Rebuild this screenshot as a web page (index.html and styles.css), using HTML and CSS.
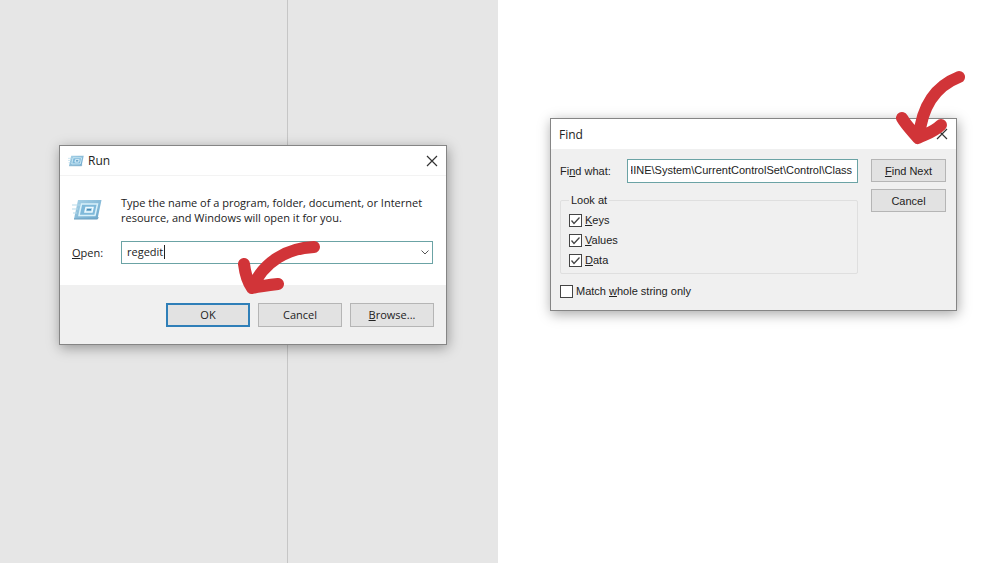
FILE: index.html
```html
<!DOCTYPE html>
<html lang="en">
<head>
    <meta charset="UTF-8">
    <meta name="viewport" content="width=device-width, initial-scale=1.0">
    <title>Run and Find</title>
    <link rel="stylesheet" href="styles.css">
</head>
<body>
    <main class="desktop">
        <section class="pane pane-run">
            <form class="window run">
                <header class="titlebar">
                    <svg class="small-icon" viewBox="0 0 30 22" aria-hidden="true"><use href="#run-icon"/></svg>
                    <h1>Run</h1>
                    <button type="button" class="close" aria-label="Close">
                        <svg viewBox="0 0 12 12" aria-hidden="true"><path d="M1 1l10 10M11 1L1 11"/></svg>
                    </button>
                </header>
                <div class="run-body">
                    <svg class="large-icon" viewBox="0 0 30 22" aria-hidden="true">
                        <defs>
                            <linearGradient id="blue" x1="0" y1="0" x2="1" y2="1">
                                <stop offset="0" stop-color="#a9d3e8"/>
                                <stop offset="1" stop-color="#6aa6cb"/>
                            </linearGradient>
                        </defs>
                        <g id="run-icon" fill="none">
                            <path d="M6 1h23.500l-4 19H2z" fill="url(#blue)"/>
                            <path d="M0 6h8M0 10h6M1 14h4" stroke="#b5d9ea" stroke-width="1.200"/>
                            <path d="M9.500 5h16l-2.500 11.500H7z" fill="#7fb9da" stroke="#d9f1fa" stroke-width="1.500"/>
                            <path d="M14 8.500h7l-1 4.500h-7z" fill="#8fc4e0" stroke="#eefaff" stroke-width="1.500"/>
                            <path d="M15 10.700h4" stroke="#4787b3" stroke-width="1.300"/>
                            <path d="M2 20h23.500l.6-2" stroke="#6a9fc0"/>
                        </g>
                    </svg>
                    <p>Type the name of a program, folder, document, or Internet resource, and Windows will open it for you.</p>
                    <label for="open"><u>O</u>pen:</label>
                    <div class="combo">
                        <input type="text" id="open" name="open" value="regedit">
                        <span class="caret"></span>
                        <button type="button" aria-label="Show list">
                            <svg viewBox="0 0 8 5" aria-hidden="true"><path d="M.5 .5L4 4 7.500 .5"/></svg>
                        </button>
                    </div>
                </div>
                <footer class="actions">
                    <button type="button" class="button default">OK</button>
                    <button type="button" class="button">Cancel</button>
                    <button type="button" class="button"><u>B</u>rowse...</button>
                </footer>
            </form>
            <svg class="arrow arrow-ok" viewBox="0 0 84 56" aria-hidden="true">
                <path d="M77 8C51 9 27 22 15 49M7 25c1 8 3 17 8 24 8-2 17-3 26-4"/>
            </svg>
        </section>

        <section class="pane">
            <form class="window find">
                <header class="titlebar">
                    <h1>Find</h1>
                    <button type="button" class="close" aria-label="Close">
                        <svg viewBox="0 0 12 12" aria-hidden="true"><path d="M1 1l10 10M11 1L1 11"/></svg>
                    </button>
                </header>
                <div class="find-body">
                    <div class="criteria">
                        <div class="search">
                            <label for="what">Fi<u>n</u>d what:</label>
                            <input type="text" id="what" name="what" value="HINE\System\CurrentControlSet\Control\Class">
                        </div>
                        <fieldset>
                            <legend>Look at</legend>
                            <label class="check"><input type="checkbox" checked><span><u>K</u>eys</span></label>
                            <label class="check"><input type="checkbox" checked><span><u>V</u>alues</span></label>
                            <label class="check"><input type="checkbox" checked><span><u>D</u>ata</span></label>
                        </fieldset>
                        <label class="check"><input type="checkbox"><span>Match <u>w</u>hole string only</span></label>
                    </div>
                    <div class="find-actions">
                        <button type="button" class="button"><u>F</u>ind Next</button>
                        <button type="button" class="button">Cancel</button>
                    </div>
                </div>
            </form>
            <svg class="arrow arrow-next" viewBox="0 0 72 76" aria-hidden="true">
                <path d="M65 8C42 17 28 36 25 68M8 49c4 7 10 13 16 20 8-4 16-6 23-13"/>
            </svg>
        </section>
    </main>
</body>
</html>
```
FILE: styles.css
```css
* {
    box-sizing: border-box;
}
body {
    margin: 0;
    background: #fff;
    color: #222;
    font-family: "Open Sans", "Noto Sans", sans-serif;
    font-size: 11px;
}
.desktop {
    display: grid;
    grid-template-columns: 498fr 502fr;
    min-height: 100vh;
}
.pane {
    position: relative;
}
.pane-run {
    background: linear-gradient(#c6c6c6, #c6c6c6) 287px 0 / 1px 100% no-repeat #e6e6e6;
}

/* windows */
.window {
    position: absolute;
    border: 1px solid #858585;
    background: #f0f0f0;
    box-shadow: 1px 3px 12px rgba(0, 0, 0, 0.35);
}
.run {
    left: 59px;
    top: 145px;
    width: 388px;
}
.find {
    left: 52px;
    top: 118px;
    width: 407px;
    font-family: "Liberation Sans", Arial, sans-serif;
}
.titlebar {
    display: flex;
    align-items: center;
    gap: 4px;
    height: 30px;
    padding: 0 8px;
    background: #fff;
}
.run .titlebar {
    border-bottom: 1px solid #f3f3f3;
}
.titlebar h1 {
    margin: 0;
    font-family: "Open Sans", "Noto Sans", sans-serif;
    font-size: 12px;
    font-weight: normal;
}
.small-icon {
    width: 16px;
    height: 12px;
}
.close {
    display: flex;
    margin-left: auto;
    padding: 0;
    border: 0;
    background: none;
}
.close svg {
    width: 12px;
    height: 12px;
    fill: none;
    stroke: #333;
    stroke-width: 1.2;
}
.button {
    height: 24px;
    padding: 0;
    border: 1px solid #b5b5b5;
    background: #e2e2e2;
    color: #222;
    font: inherit;
}
.default {
    border: 2px solid #2f7fb8;
}
input {
    font: inherit;
    color: #222;
}
input[type="text"] {
    min-width: 0;
    border: 1px solid #6ba3a5;
    background: #fff;
    outline: 0;
}

/* run */
.run-body {
    display: grid;
    grid-template-columns: 37px 1fr;
    gap: 16px 12px;
    align-items: center;
    padding: 19px 13px 21px 12px;
    background: #fff;
}
.run-body p {
    margin: 0;
    line-height: 15px;
}
.large-icon {
    width: 30px;
    height: 22px;
}
.combo {
    position: relative;
    display: flex;
}
.combo input {
    flex: 1;
    height: 23px;
    padding: 0 24px 2px 5px;
}
.caret {
    position: absolute;
    left: 43px;
    top: 4px;
    width: 1px;
    height: 14px;
    background: #222;
}
.combo button {
    position: absolute;
    right: 4px;
    top: 9px;
    display: flex;
    padding: 0;
    border: 0;
    background: none;
}
.combo svg {
    width: 8px;
    height: 5px;
    fill: none;
    stroke: #555;
}
.actions {
    display: flex;
    justify-content: flex-end;
    gap: 8px;
    padding: 18px 12px 17px;
}
.actions .button {
    width: 84px;
    padding-bottom: 2px;
}

/* find */
.find-body {
    display: grid;
    grid-template-columns: 1fr 75px;
    gap: 13px;
    padding: 10px 10px 9px 9px;
}
.search {
    display: grid;
    grid-template-columns: 67px 1fr;
    align-items: center;
}
.search input {
    height: 24px;
    padding: 0 5px 2px 3px;
    direction: rtl;
}
fieldset {
    margin: 10px 0 7px;
    padding: 10px 8px 3px;
    border: 1px solid #dfdfdf;
    border-radius: 2px;
}
legend {
    height: 14px;
    margin-bottom: -7px;
    padding: 0 2px;
    line-height: 14px;
}
.check {
    display: flex;
    align-items: center;
    gap: 3px;
    height: 20px;
}
.check input {
    appearance: none;
    width: 13px;
    height: 13px;
    margin: 0;
    border: 1px solid #444;
    background: #fff;
}
.check input:checked {
    background: #fff url("data:image/svg+xml,%3Csvg xmlns='http://www.w3.org/2000/svg' viewBox='0 0 11 11'%3E%3Cpath d='M1.500 5.500l2.500 3L9.500 2.500' fill='none' stroke='%23444' stroke-width='1.300'/%3E%3C/svg%3E");
}
.find-actions {
    display: flex;
    flex-direction: column;
    gap: 7px;
}
.find-actions .button {
    height: 23px;
}

/* red arrows */
.arrow {
    position: absolute;
    fill: none;
    stroke: #d13438;
    stroke-width: 12;
    stroke-linecap: round;
    stroke-linejoin: round;
}
.arrow-ok {
    left: 237px;
    top: 239px;
    width: 84px;
    height: 56px;
}
.arrow-next {
    left: 396px;
    top: 69px;
    width: 72px;
    height: 76px;
}
```
